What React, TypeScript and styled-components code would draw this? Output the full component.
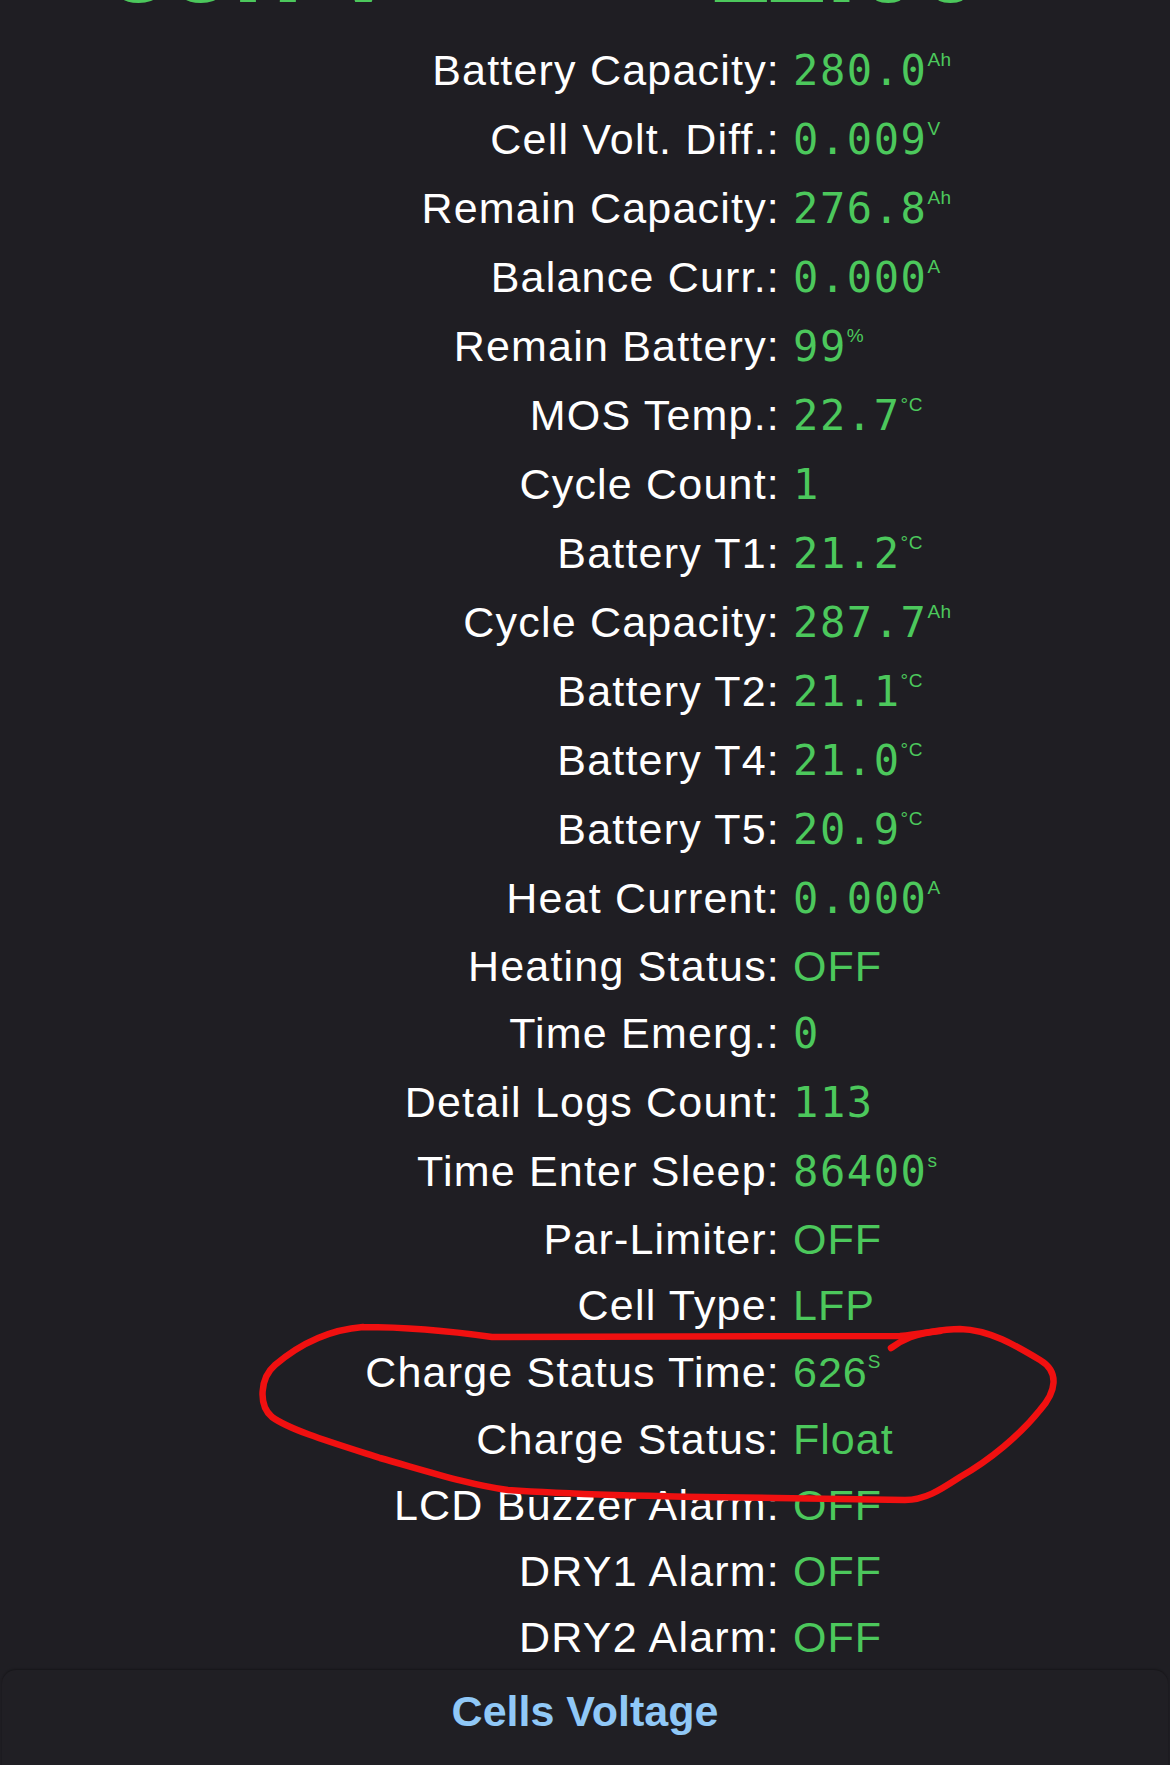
import React from 'react';
import styled, { createGlobalStyle } from 'styled-components';

const GlobalStyle = createGlobalStyle`
  html, body {
    margin: 0;
    padding: 0;
    background: #1f1e23;
  }
  body {
    font-family: 'Liberation Sans', Arial, sans-serif;
  }
`;

type Info = {
  label: string;
  value: string;
  unit?: string;
  mono?: boolean;
};

const rows: Info[] = [
  { label: 'Battery Capacity:', value: '280.0', unit: 'Ah', mono: true },
  { label: 'Cell Volt. Diff.:', value: '0.009', unit: 'V', mono: true },
  { label: 'Remain Capacity:', value: '276.8', unit: 'Ah', mono: true },
  { label: 'Balance Curr.:', value: '0.000', unit: 'A', mono: true },
  { label: 'Remain Battery:', value: '99', unit: '%', mono: true },
  { label: 'MOS Temp.:', value: '22.7', unit: '°C', mono: true },
  { label: 'Cycle Count:', value: '1', mono: true },
  { label: 'Battery T1:', value: '21.2', unit: '°C', mono: true },
  { label: 'Cycle Capacity:', value: '287.7', unit: 'Ah', mono: true },
  { label: 'Battery T2:', value: '21.1', unit: '°C', mono: true },
  { label: 'Battery T4:', value: '21.0', unit: '°C', mono: true },
  { label: 'Battery T5:', value: '20.9', unit: '°C', mono: true },
  { label: 'Heat Current:', value: '0.000', unit: 'A', mono: true },
  { label: 'Heating Status:', value: 'OFF' },
  { label: 'Time Emerg.:', value: '0', mono: true },
  { label: 'Detail Logs Count:', value: '113', mono: true },
  { label: 'Time Enter Sleep:', value: '86400', unit: 's', mono: true },
  { label: 'Par-Limiter:', value: 'OFF' },
  { label: 'Cell Type:', value: 'LFP' },
  { label: 'Charge Status Time:', value: '626', unit: 'S' },
  { label: 'Charge Status:', value: 'Float' },
  { label: 'LCD Buzzer Alarm:', value: 'OFF' },
  { label: 'DRY1 Alarm:', value: 'OFF' },
  { label: 'DRY2 Alarm:', value: 'OFF' },
];

const rowHeight = (r: Info) => (r.mono ? 69 : r.unit ? 68 : 66);

const Page = styled.div`
  position: relative;
  width: 1170px;
  min-height: 1765px;
  background: #1f1e23;
  overflow: hidden;
`;

// big readout scrolled off the top, only the glyph bottoms show
const Hero = styled.div`
  height: 5px;
  overflow: hidden;
  display: flex;
  align-items: flex-end;
  gap: 307px;
  padding-left: 108px;
  color: #4cc85c;
  font: bold 112px/82px 'Liberation Sans', sans-serif;
  white-space: nowrap;
`;

const List = styled.div`
  padding-top: 31px;
`;

const Row = styled.div<{ $h: number }>`
  display: grid;
  grid-template-columns: 780px 1fr;
  column-gap: 13px;
  align-items: baseline;
  height: ${(p) => p.$h}px;
  line-height: ${(p) => p.$h}px;
`;

const Label = styled.div`
  text-align: right;
  color: #ffffff;
  font-size: 43px;
  letter-spacing: 1.2px;
  white-space: nowrap;
`;

const Value = styled.div<{ $mono?: boolean }>`
  color: #4cc85c;
  white-space: nowrap;
  font-family: ${(p) =>
    p.$mono ? "'DejaVu Sans Mono', monospace" : "'Liberation Sans', sans-serif"};
  font-size: ${(p) => (p.$mono ? 42 : 43)}px;
  letter-spacing: ${(p) => (p.$mono ? 1.6 : 1)}px;
`;

const Unit = styled.span`
  font-family: 'Liberation Sans', sans-serif;
  font-size: 19px;
  letter-spacing: 0.5px;
  line-height: 1;
  vertical-align: 19px;
`;

const Card = styled.section`
  margin: 0 2px;
  min-height: 97px;
  padding-top: 17px;
  box-sizing: border-box;
  border-radius: 14px 14px 0 0;
  background: #201f24;
  box-shadow: 0 -1px 2px rgba(0, 0, 0, 0.3);
`;

const CardTitle = styled.h2`
  margin: 0;
  text-align: center;
  color: #90c8f7;
  font: bold 43px/1.15 'Liberation Sans', sans-serif;
`;

const Annotation = styled.svg`
  position: absolute;
  left: 0;
  top: 0;
  width: 1170px;
  height: 1765px;
  pointer-events: none;
`;

export default function App() {
  return (
    <Page>
      <GlobalStyle />
      <Hero>
        <span>55.7V</span>
        <span>11.00</span>
      </Hero>

      <List>
        {rows.map((r) => (
          <Row key={r.label} $h={rowHeight(r)}>
            <Label>{r.label}</Label>
            <Value $mono={r.mono}>
              {r.value}
              {r.unit && <Unit>{r.unit}</Unit>}
            </Value>
          </Row>
        ))}
      </List>

      <Card>
        <CardTitle>Cells Voltage</CardTitle>
      </Card>

      {/* hand drawn circle around the charge status rows */}
      <Annotation viewBox="0 0 1170 1765">
        <path
          d="M 363 1327 C 400 1327, 450 1331, 492 1337 L 900 1336 C 925 1334, 940 1329, 960 1329 C 990 1330, 1015 1345, 1040 1360 C 1060 1372, 1056 1392, 1040 1410 C 1020 1435, 990 1460, 960 1477 C 940 1490, 925 1500, 905 1500 L 776 1498 C 680 1497, 580 1495, 508 1490 C 470 1485, 430 1472, 380 1458 C 330 1442, 290 1430, 272 1417 C 258 1405, 260 1378, 275 1365 C 295 1348, 325 1330, 363 1327"
          fill="none"
          stroke="#f01010"
          strokeWidth={6.5}
          strokeLinecap="round"
          strokeLinejoin="round"
        />
        <path
          d="M 891 1348 C 902 1340, 915 1333, 940 1331"
          fill="none"
          stroke="#f01010"
          strokeWidth={6.5}
          strokeLinecap="round"
        />
      </Annotation>
    </Page>
  );
}
